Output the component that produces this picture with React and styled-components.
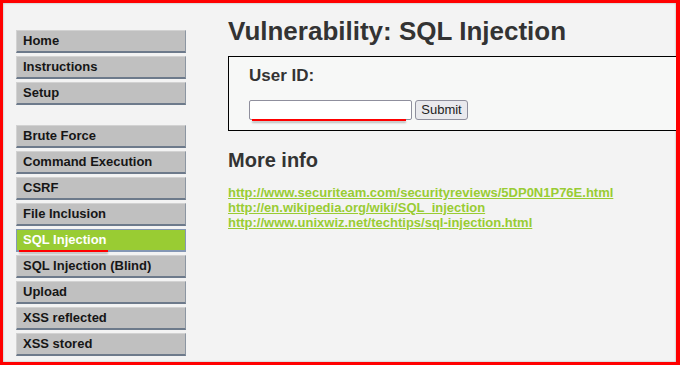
import React from "react";
import styled, { createGlobalStyle } from "styled-components";

const Global = createGlobalStyle`
  html, body { margin: 0; padding: 0; background: #f3f3f3; }
  body { font-family: "Liberation Sans", Arial, sans-serif; }
`;

const Frame = styled.div`
  position: relative;
  width: 680px;
  height: 365px;
  box-sizing: border-box;
  border-style: solid;
  border-color: #ff0000;
  border-width: 3px 4px 3px 3px;
  background: #f3f3f3;
  overflow: hidden;
  box-shadow: inset 0 0 2px rgba(0, 0, 0, 0.35);
  display: flex;
  align-items: flex-start;
`;

const Sidebar = styled.nav`
  flex: none;
  width: 170px;
  padding: 27px 0 0 13px;
`;

const MenuBlock = styled.ul`
  list-style: none;
  margin: 0 0 ${(p) => (p.$last ? 0 : 20)}px 0;
  padding: 0;
  display: flex;
  flex-direction: column;
  gap: 3px;
`;

const MenuItem = styled.li`
  position: relative;
  box-sizing: border-box;
  height: 23px;
  padding: 0 6px;
  font-size: 13px;
  font-weight: bold;
  line-height: 20px;
  white-space: nowrap;
  color: ${(p) => (p.$active ? "#ffffff" : "#161616")};
  background: ${(p) => (p.$active ? "#99cc33" : "#c0c0c0")};
  border-style: solid;
  border-width: 1px 1px 2px 1px;
  border-color: ${(p) =>
    p.$active
      ? "#8497b5 #8497b5 #8497b5 #8497b5"
      : "#d2d2d2 #8c96a2 #6d7a8b #d2d2d2"};
`;

const Mark = styled.span`
  position: absolute;
  height: 2px;
  background: #ff0000;
  box-shadow: 0 2px 2px rgba(0, 0, 0, 0.25);
  pointer-events: none;
`;

const Main = styled.main`
  flex: none;
  margin-left: 42px;
  padding-top: 13px;
  color: #333333;
`;

const Title = styled.h1`
  margin: 0;
  font-size: 26px;
  line-height: 30px;
  font-weight: bold;
  color: #333333;
  white-space: nowrap;
`;

const CodeArea = styled.div`
  margin-top: 10px;
  width: 470px;
  box-sizing: border-box;
  border: 1px solid #000000;
  background: #f7f8f7;
  padding: 9px 20px 10px 20px;
`;

const Label = styled.div`
  font-size: 17px;
  line-height: 20px;
  font-weight: bold;
  color: #333333;
`;

const FormRow = styled.div`
  margin-top: 14px;
  display: flex;
  align-items: center;
  gap: 3px;
`;

const InputWrap = styled.div`
  position: relative;
  display: flex;
`;

const TextInput = styled.input`
  box-sizing: border-box;
  width: 163px;
  height: 20px;
  margin: 0;
  border: 1px solid #8f8f9d;
  border-radius: 2px;
  background: #ffffff;
  padding: 0 2px;
  font-family: "Liberation Sans", Arial, sans-serif;
  font-size: 13px;
`;

const SubmitButton = styled.button`
  box-sizing: border-box;
  width: 53px;
  height: 20px;
  margin: 0;
  padding: 0;
  border: 1px solid #8f8f9d;
  border-radius: 3px;
  background: #e9e9ed;
  color: #222222;
  font-family: "Liberation Sans", Arial, sans-serif;
  font-size: 13px;
  line-height: 18px;
`;

const SubTitle = styled.h2`
  margin: 18px 0 0 0;
  font-size: 20px;
  line-height: 23px;
  font-weight: bold;
  color: #333333;
`;

const Links = styled.ul`
  list-style: none;
  margin: 13px 0 0 0;
  padding: 0;
`;

const LinkItem = styled.li`
  font-size: 13px;
  line-height: 15px;
  font-weight: bold;
`;

const Link = styled.a`
  color: #99cc33;
  text-decoration: underline;
  white-space: nowrap;
`;

const topMenu = ["Home", "Instructions", "Setup"];
const vulnMenu = [
  "Brute Force",
  "Command Execution",
  "CSRF",
  "File Inclusion",
  "SQL Injection",
  "SQL Injection (Blind)",
  "Upload",
  "XSS reflected",
  "XSS stored",
];
const links = [
  "http://www.securiteam.com/securityreviews/5DP0N1P76E.html",
  "http://en.wikipedia.org/wiki/SQL_injection",
  "http://www.unixwiz.net/techtips/sql-injection.html",
];

export default function App() {
  return (
    <>
      <Global />
      <Frame>
        <Sidebar>
          <MenuBlock>
            {topMenu.map((m) => (
              <MenuItem key={m}>{m}</MenuItem>
            ))}
          </MenuBlock>
          <MenuBlock $last>
            {vulnMenu.map((m) => (
              <MenuItem key={m} $active={m === "SQL Injection"}>
                {m}
                {m === "SQL Injection" && (
                  <Mark style={{ left: 2, width: 89, top: 20 }} />
                )}
              </MenuItem>
            ))}
          </MenuBlock>
        </Sidebar>
        <Main>
          <Title>Vulnerability: SQL Injection</Title>
          <CodeArea>
            <Label>User ID:</Label>
            <FormRow>
              <InputWrap>
                <TextInput type="text" name="id" />
                <Mark style={{ left: 3, width: 154, top: 19 }} />
              </InputWrap>
              <SubmitButton type="button">Submit</SubmitButton>
            </FormRow>
          </CodeArea>
          <SubTitle>More info</SubTitle>
          <Links>
            {links.map((l) => (
              <LinkItem key={l}>
                <Link href={l}>{l}</Link>
              </LinkItem>
            ))}
          </Links>
        </Main>
      </Frame>
    </>
  );
}
